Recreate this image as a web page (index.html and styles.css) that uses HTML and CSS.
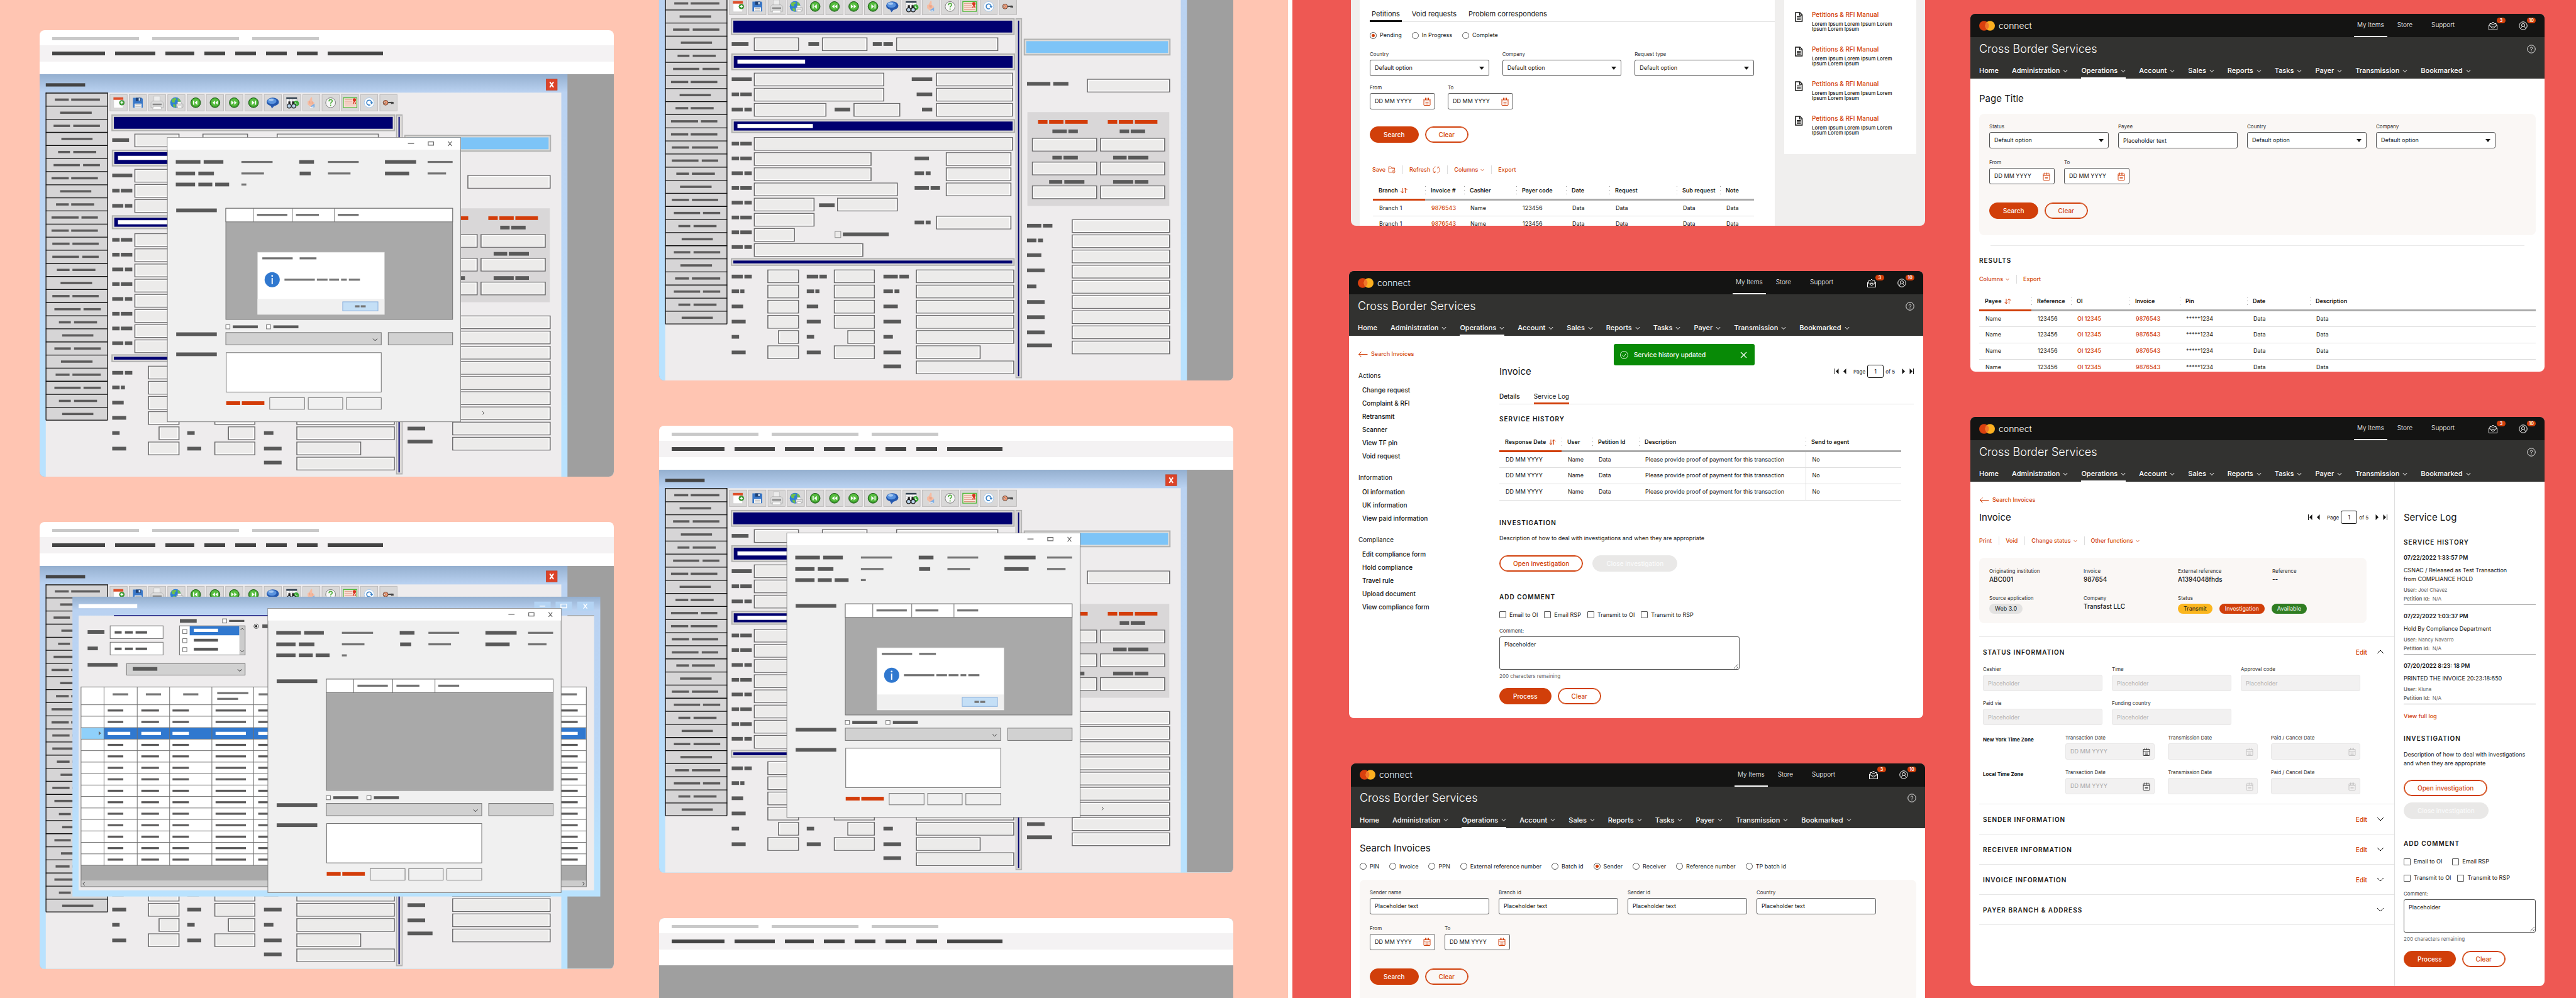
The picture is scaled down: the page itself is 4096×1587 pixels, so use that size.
FILE: index.html
```html
<!DOCTYPE html>
<html lang="en">
<head>
<meta charset="utf-8">
<title>Cross Border Services</title>
<link rel="stylesheet" href="styles.css">
</head>
<body>
<svg class="defs" aria-hidden="true">
  <defs id="legacy-defs"></defs>
  <symbol id="chev" viewBox="0 0 8 6"><path d="M.8 1 4 4.6 7.2 1" fill="none" stroke="currentColor"/></symbol>
  <symbol id="chev-up" viewBox="0 0 12 7"><path d="M1 6 6 1l5 5" fill="none" stroke="currentColor"/></symbol>
  <symbol id="chev-down" viewBox="0 0 12 7"><path d="M1 1l5 5 5-5" fill="none" stroke="currentColor"/></symbol>
  <symbol id="logo" viewBox="0 0 50 31"><circle cx="15.5" cy="15.5" r="15.5" fill="#d9400f"/><circle cx="34.5" cy="15.5" r="15.5" fill="#fbb020"/><path d="M25 3.3a15.5 15.5 0 0 1 0 24.4 15.500 15.500 0 0 1 0-24.400z" fill="#f0762b"/></symbol>
  <symbol id="mail" viewBox="0 0 28 28"><path d="M4 12H1v15h26V12h-3M4 7h5l5-5 5 5h5M4 7v8l10 7 10-7V7M9 11h10M9 15h10" fill="none" stroke="currentColor" stroke-width="2"/></symbol>
  <symbol id="user" viewBox="0 0 28 28"><g fill="none" stroke="currentColor" stroke-width="2"><circle cx="14" cy="14" r="12.500"/><circle cx="14" cy="12" r="5"/><path d="M6 23c1-4 4-6 5.500-6.500M22 23c-1-4-4-6-5.500-6.500"/></g></symbol>
  <symbol id="help" viewBox="0 0 28 28"><circle cx="14" cy="14" r="12.500" fill="none" stroke="currentColor" stroke-width="1.800"/><path d="M10.500 11.500c0-5 7.500-4.500 7 0-.3 2.500-3.500 2.500-3.500 5.500M14 19v2" fill="none" stroke="currentColor" stroke-width="1.800"/></symbol>
  <symbol id="back" viewBox="0 0 30 18"><path d="M1 9h28M9 1 1 9l8 8" fill="none" stroke="currentColor" stroke-width="2"/></symbol>
  <symbol id="cal" viewBox="0 0 24 26"><path d="M2 5h20v19a1 1 0 0 1-1 1H3a1 1 0 0 1-1-1zM2 11h20M7 16.500h10M7 20.500h10M7 1v7M12 1v7M17 1v7" fill="none" stroke="currentColor" stroke-width="2"/></symbol>
  <symbol id="sort" viewBox="0 0 22 20"><path d="M6 2v16M1 12l5 6 4-5M15 18V2M11 7l4-5 6 6" fill="none" stroke="currentColor" stroke-width="2"/></symbol>
  <symbol id="first" viewBox="0 0 14 18"><path d="M0 0h2v18H0zM13 0v18L4 9z" fill="currentColor"/></symbol>
  <symbol id="prev" viewBox="0 0 10 18"><path d="M9 0v18L0 9z" fill="currentColor"/></symbol>
  <symbol id="next" viewBox="0 0 10 18"><path d="M1 0v18l9-9z" fill="currentColor"/></symbol>
  <symbol id="last" viewBox="0 0 14 18"><path d="M12 0h2v18h-2zM1 0v18l9-9z" fill="currentColor"/></symbol>
  <symbol id="doc" viewBox="0 0 28 32"><path d="M4 2h14l7 7v21H4z" fill="none" stroke="currentColor" stroke-width="3"/><path d="M17 2v8h8M8 15h13M8 19.500h13M8 24h13" fill="none" stroke="currentColor" stroke-width="2.500"/></symbol>
  <symbol id="save" viewBox="0 0 24 24"><path d="M12 20H2V2h7l3 4h9v7M2 9h19" fill="none" stroke="currentColor" stroke-width="1.500"/><circle cx="18" cy="18" r="4" fill="none" stroke="currentColor" stroke-width="1.500"/><path d="M18 15v5M16 18l2 2 2-2" fill="none" stroke="currentColor"/></symbol>
  <symbol id="refresh" viewBox="0 0 24 24"><path d="M9 2C0 5-1 17 7 21M3 21h5v-5M15 22c9-3 10-15 2-19M21 3h-5v5" fill="none" stroke="currentColor" stroke-width="1.500"/></symbol>
  <symbol id="ok" viewBox="0 0 26 26"><circle cx="13" cy="13" r="12" fill="none" stroke="currentColor" stroke-width="1.800"/><path d="M7 13.500 11.500 18 19 8.500" fill="none" stroke="currentColor" stroke-width="1.800"/></symbol>
  <symbol id="cross" viewBox="0 0 22 22"><path d="M2 2l18 18M20 2 2 20" fill="none" stroke="currentColor" stroke-width="2.400"/></symbol>
</svg>

<main class="board">
  <section class="half half-before">
    <div class="column">
      <article class="card legacy">
        <header class="legacy-head">
          <div class="tabs-strip"><i></i><i></i><i></i></div>
          <div class="menu-strip"><i></i><i></i><i></i><i></i><i></i><i></i><i></i><i></i></div>
        </header>
        <svg class="legacy-screen" viewBox="0 107 1400 982" role="img" aria-label="Desktop form with a message"><use href="#screen"/><use href="#modal"/><use href="#message"/></svg>
      </article>
      <article class="card legacy">
        <header class="legacy-head">
          <div class="tabs-strip"><i></i><i></i><i></i></div>
          <div class="menu-strip"><i></i><i></i><i></i><i></i><i></i><i></i><i></i><i></i></div>
        </header>
        <svg class="legacy-screen" viewBox="0 107 1400 982" role="img" aria-label="Desktop form with stacked windows"><use href="#screen"/><use href="#grid-window"/><use href="#modal" x="245" y="-51"/></svg>
      </article>
    </div>
    <div class="column column-raised">
      <article class="card legacy">
        <header class="legacy-head">
          <div class="tabs-strip"><i></i><i></i><i></i></div>
          <div class="menu-strip"><i></i><i></i><i></i><i></i><i></i><i></i><i></i><i></i></div>
        </header>
        <svg class="legacy-screen" viewBox="0 107 1400 982" role="img" aria-label="Desktop form"><use href="#screen"/></svg>
      </article>
      <article class="card legacy">
        <header class="legacy-head">
          <div class="tabs-strip"><i></i><i></i><i></i></div>
          <div class="menu-strip"><i></i><i></i><i></i><i></i><i></i><i></i><i></i><i></i></div>
        </header>
        <svg class="legacy-screen" viewBox="0 107 1400 982" role="img" aria-label="Desktop form with a message"><use href="#screen"/><use href="#modal"/><use href="#message"/></svg>
      </article>
      <article class="card legacy legacy-empty">
        <header class="legacy-head">
          <div class="tabs-strip"><i></i><i></i><i></i></div>
          <div class="menu-strip"><i></i><i></i><i></i><i></i><i></i><i></i><i></i><i></i></div>
        </header>
      </article>
    </div>
  </section>

  <section class="half half-after">
    <div class="column column-top">
      <article class="card petitions">
        <div class="petitions-main">
          <nav class="tabs tabs-dark"><a href="#" class="on">Petitions</a><a href="#">Void requests</a><a href="#">Problem correspondens</a></nav>
          <div class="choices">
            <label><input type="radio" name="state" checked>Pending</label>
            <label><input type="radio" name="state">In Progress</label>
            <label><input type="radio" name="state">Complete</label>
          </div>
          <div class="fields fields-3">
            <label class="field">Country<span class="select"><select><option>Default option</option></select></span></label>
            <label class="field">Company<span class="select"><select><option>Default option</option></select></span></label>
            <label class="field">Request type<span class="select"><select><option>Default option</option></select></span></label>
          </div>
          <div class="dates dates-wide">
            <label class="field">From<span class="date"><input type="text" value="DD MM YYYY"><svg><use href="#cal"/></svg></span></label>
            <label class="field">To<span class="date"><input type="text" value="DD MM YYYY"><svg><use href="#cal"/></svg></span></label>
          </div>
          <div class="buttons"><button class="btn solid">Search</button><button class="btn">Clear</button></div>
          <div class="actions"><a href="#">Save <svg class="i12"><use href="#save"/></svg></a><a href="#">Refresh <svg class="i12"><use href="#refresh"/></svg></a><a href="#">Columns <svg class="i6"><use href="#chev"/></svg></a><a href="#">Export</a></div>
          <table class="data t-branch">
            <colgroup><col><col><col><col><col><col><col><col></colgroup>
            <thead><tr><th>Branch <svg><use href="#sort"/></svg></th><th>Invoice #</th><th>Cashier</th><th>Payer code</th><th>Date</th><th>Request</th><th>Sub request</th><th>Note</th></tr></thead>
            <tbody>
              <tr><td>Branch 1</td><td><a href="#">9876543</a></td><td>Name</td><td>123456</td><td>Data</td><td>Data</td><td>Data</td><td>Data</td></tr>
              <tr><td>Branch 1</td><td><a href="#">9876543</a></td><td>Name</td><td>123456</td><td>Data</td><td>Data</td><td>Data</td><td>Data</td></tr>
            </tbody>
          </table>
        </div>
        <aside class="manuals">
          <div class="manual"><svg><use href="#doc"/></svg><div><a href="#">Petitions &amp; RFI Manual</a><p>Lorem Ipsum Lorem Ipsum Lorem<br>Ipsum Lorem Ipsum</p></div></div>
          <div class="manual"><svg><use href="#doc"/></svg><div><a href="#">Petitions &amp; RFI Manual</a><p>Lorem Ipsum Lorem Ipsum Lorem<br>Ipsum Lorem Ipsum</p></div></div>
          <div class="manual"><svg><use href="#doc"/></svg><div><a href="#">Petitions &amp; RFI Manual</a><p>Lorem Ipsum Lorem Ipsum Lorem<br>Ipsum Lorem Ipsum</p></div></div>
          <div class="manual"><svg><use href="#doc"/></svg><div><a href="#">Petitions &amp; RFI Manual</a><p>Lorem Ipsum Lorem Ipsum Lorem<br>Ipsum Lorem Ipsum</p></div></div>
        </aside>
      </article>

      <article class="card service">
        <header class="app-head">
          <div class="topbar"><svg class="logo"><use href="#logo"/></svg><span class="brand">connect</span>
            <nav><a href="#" class="on">My Items</a><a href="#">Store</a><a href="#">Support</a></nav>
            <div class="alerts"><span><svg><use href="#mail"/></svg><b>3</b></span><span><svg><use href="#user"/></svg><b>10</b></span></div></div>
          <div class="titlebar"><h1>Cross Border Services</h1><svg><use href="#help"/></svg></div>
          <nav class="menu"><a href="#">Home</a><a href="#">Administration<svg><use href="#chev"/></svg></a><a href="#" class="on">Operations<svg><use href="#chev"/></svg></a><a href="#">Account<svg><use href="#chev"/></svg></a><a href="#">Sales<svg><use href="#chev"/></svg></a><a href="#">Reports<svg><use href="#chev"/></svg></a><a href="#">Tasks<svg><use href="#chev"/></svg></a><a href="#">Payer<svg><use href="#chev"/></svg></a><a href="#">Transmission<svg><use href="#chev"/></svg></a><a href="#">Bookmarked<svg><use href="#chev"/></svg></a></nav>
        </header>
        <div class="toast"><svg class="i13"><use href="#ok"/></svg><span>Service history updated</span><button><svg><use href="#cross"/></svg></button></div>
        <div class="service-body">
          <aside class="side-menu">
            <a href="#" class="back"><svg><use href="#back"/></svg>Search Invoices</a>
            <h3>Actions</h3>
            <ul><li><a href="#">Change request</a></li><li><a href="#">Complaint &amp; RFI</a></li><li><a href="#">Retransmit</a></li><li><a href="#">Scanner</a></li><li><a href="#">View TF pin</a></li><li><a href="#">Void request</a></li></ul>
            <h3>Information</h3>
            <ul><li><a href="#">OI information</a></li><li><a href="#">UK information</a></li><li><a href="#">View paid information</a></li></ul>
            <h3>Compliance</h3>
            <ul><li><a href="#">Edit compliance form</a></li><li><a href="#">Hold compliance</a></li><li><a href="#">Travel rule</a></li><li><a href="#">Upload document</a></li><li><a href="#">View compliance form</a></li></ul>
          </aside>
          <div class="service-main">
            <div class="title-row"><h2>Invoice</h2>
              <div class="pager"><svg class="p7"><use href="#first"/></svg><svg class="p5"><use href="#prev"/></svg><label>Page <input type="text" value="1"></label><span>of 5</span><svg class="p5"><use href="#next"/></svg><svg class="p7"><use href="#last"/></svg></div></div>
            <nav class="tabs tabs-log"><a href="#" class="strong">Details</a><a href="#" class="on">Service Log</a></nav>
            <h4 class="h-history">Service history</h4>
            <table class="data t-history">
              <colgroup><col><col><col><col><col></colgroup>
              <thead><tr><th>Response Date <svg><use href="#sort"/></svg></th><th>User</th><th>Petition Id</th><th>Description</th><th>Send to agent</th></tr></thead>
              <tbody>
                <tr><td>DD MM YYYY</td><td>Name</td><td>Data</td><td>Please provide proof of payment for this transaction</td><td>No</td></tr>
                <tr><td>DD MM YYYY</td><td>Name</td><td>Data</td><td>Please provide proof of payment for this transaction</td><td>No</td></tr>
                <tr><td>DD MM YYYY</td><td>Name</td><td>Data</td><td>Please provide proof of payment for this transaction</td><td>No</td></tr>
              </tbody>
            </table>
            <h4 class="h-invest">Investigation</h4>
            <p class="desc">Description of how to deal with investigations and when they are appropriate</p>
            <div class="buttons invest-buttons"><button class="btn">Open investigation</button><button class="btn" disabled>Close investigation</button></div>
            <h4 class="h-comment">Add comment</h4>
            <div class="checks"><label><input type="checkbox">Email to OI</label><label><input type="checkbox">Email RSP</label><label><input type="checkbox">Transmit to OI</label><label><input type="checkbox">Transmit to RSP</label></div>
            <label class="field comment">Comment:<textarea>Placeholder</textarea></label>
            <p class="remaining">200 characters remaining</p>
            <div class="buttons comment-buttons"><button class="btn solid">Process</button><button class="btn">Clear</button></div>
          </div>
        </div>
      </article>

      <article class="card search">
        <header class="app-head">
          <div class="topbar"><svg class="logo"><use href="#logo"/></svg><span class="brand">connect</span>
            <nav><a href="#" class="on">My Items</a><a href="#">Store</a><a href="#">Support</a></nav>
            <div class="alerts"><span><svg><use href="#mail"/></svg><b>3</b></span><span><svg><use href="#user"/></svg><b>10</b></span></div></div>
          <div class="titlebar"><h1>Cross Border Services</h1><svg><use href="#help"/></svg></div>
          <nav class="menu"><a href="#">Home</a><a href="#">Administration<svg><use href="#chev"/></svg></a><a href="#" class="on">Operations<svg><use href="#chev"/></svg></a><a href="#">Account<svg><use href="#chev"/></svg></a><a href="#">Sales<svg><use href="#chev"/></svg></a><a href="#">Reports<svg><use href="#chev"/></svg></a><a href="#">Tasks<svg><use href="#chev"/></svg></a><a href="#">Payer<svg><use href="#chev"/></svg></a><a href="#">Transmission<svg><use href="#chev"/></svg></a><a href="#">Bookmarked<svg><use href="#chev"/></svg></a></nav>
        </header>
        <div class="page-body">
          <h2>Search Invoices</h2>
          <div class="choices by-kind">
            <label><input type="radio" name="kind">PIN</label><label><input type="radio" name="kind">Invoice</label><label><input type="radio" name="kind">PPN</label><label><input type="radio" name="kind">External reference number</label><label><input type="radio" name="kind">Batch id</label><label><input type="radio" name="kind" checked>Sender</label><label><input type="radio" name="kind">Receiver</label><label><input type="radio" name="kind">Reference number</label><label><input type="radio" name="kind">TP batch id</label>
          </div>
          <form class="panel">
            <div class="fields">
              <label class="field">Sender name<input type="text" value="Placeholder text"></label>
              <label class="field">Branch id<input type="text" value="Placeholder text"></label>
              <label class="field">Sender id<input type="text" value="Placeholder text"></label>
              <label class="field">Country<input type="text" value="Placeholder text"></label>
            </div>
            <div class="dates">
              <label class="field">From<span class="date"><input type="text" value="DD MM YYYY"><svg><use href="#cal"/></svg></span></label>
              <label class="field">To<span class="date"><input type="text" value="DD MM YYYY"><svg><use href="#cal"/></svg></span></label>
            </div>
            <div class="buttons"><button type="button" class="btn solid">Search</button><button type="button" class="btn">Clear</button></div>
          </form>
        </div>
      </article>
    </div>

    <div class="column column-fourth">
      <article class="card results">
        <header class="app-head">
          <div class="topbar"><svg class="logo"><use href="#logo"/></svg><span class="brand">connect</span>
            <nav><a href="#" class="on">My Items</a><a href="#">Store</a><a href="#">Support</a></nav>
            <div class="alerts"><span><svg><use href="#mail"/></svg><b>3</b></span><span><svg><use href="#user"/></svg><b>10</b></span></div></div>
          <div class="titlebar"><h1>Cross Border Services</h1><svg><use href="#help"/></svg></div>
          <nav class="menu"><a href="#">Home</a><a href="#">Administration<svg><use href="#chev"/></svg></a><a href="#" class="on">Operations<svg><use href="#chev"/></svg></a><a href="#">Account<svg><use href="#chev"/></svg></a><a href="#">Sales<svg><use href="#chev"/></svg></a><a href="#">Reports<svg><use href="#chev"/></svg></a><a href="#">Tasks<svg><use href="#chev"/></svg></a><a href="#">Payer<svg><use href="#chev"/></svg></a><a href="#">Transmission<svg><use href="#chev"/></svg></a><a href="#">Bookmarked<svg><use href="#chev"/></svg></a></nav>
        </header>
        <div class="page-body">
          <h2>Page Title</h2>
          <form class="panel">
            <div class="fields">
              <label class="field">Status<span class="select"><select><option>Default option</option></select></span></label>
              <label class="field">Payee<input type="text" value="Placeholder text"></label>
              <label class="field">Country<span class="select"><select><option>Default option</option></select></span></label>
              <label class="field">Company<span class="select"><select><option>Default option</option></select></span></label>
            </div>
            <div class="dates">
              <label class="field">From<span class="date"><input type="text" value="DD MM YYYY"><svg><use href="#cal"/></svg></span></label>
              <label class="field">To<span class="date"><input type="text" value="DD MM YYYY"><svg><use href="#cal"/></svg></span></label>
            </div>
            <div class="buttons"><button type="button" class="btn solid">Search</button><button type="button" class="btn">Clear</button></div>
          </form>
          <hr>
          <h4>Results</h4>
          <div class="actions"><a href="#">Columns <svg class="i6"><use href="#chev"/></svg></a><a href="#">Export</a></div>
          <table class="data t-results">
            <colgroup><col><col><col><col><col><col><col></colgroup>
            <thead><tr><th>Payee <svg><use href="#sort"/></svg></th><th>Reference</th><th>OI</th><th>Invoice</th><th>Pin</th><th>Date</th><th>Description</th></tr></thead>
            <tbody>
              <tr><td>Name</td><td>123456</td><td><a href="#">OI 12345</a></td><td><a href="#">9876543</a></td><td>*****1234</td><td>Data</td><td>Data</td></tr>
              <tr><td>Name</td><td>123456</td><td><a href="#">OI 12345</a></td><td><a href="#">9876543</a></td><td>*****1234</td><td>Data</td><td>Data</td></tr>
              <tr><td>Name</td><td>123456</td><td><a href="#">OI 12345</a></td><td><a href="#">9876543</a></td><td>*****1234</td><td>Data</td><td>Data</td></tr>
              <tr><td>Name</td><td>123456</td><td><a href="#">OI 12345</a></td><td><a href="#">9876543</a></td><td>*****1234</td><td>Data</td><td>Data</td></tr>
            </tbody>
          </table>
        </div>
      </article>

      <article class="card invoice">
        <header class="app-head">
          <div class="topbar"><svg class="logo"><use href="#logo"/></svg><span class="brand">connect</span>
            <nav><a href="#" class="on">My Items</a><a href="#">Store</a><a href="#">Support</a></nav>
            <div class="alerts"><span><svg><use href="#mail"/></svg><b>3</b></span><span><svg><use href="#user"/></svg><b>10</b></span></div></div>
          <div class="titlebar"><h1>Cross Border Services</h1><svg><use href="#help"/></svg></div>
          <nav class="menu"><a href="#">Home</a><a href="#">Administration<svg><use href="#chev"/></svg></a><a href="#" class="on">Operations<svg><use href="#chev"/></svg></a><a href="#">Account<svg><use href="#chev"/></svg></a><a href="#">Sales<svg><use href="#chev"/></svg></a><a href="#">Reports<svg><use href="#chev"/></svg></a><a href="#">Tasks<svg><use href="#chev"/></svg></a><a href="#">Payer<svg><use href="#chev"/></svg></a><a href="#">Transmission<svg><use href="#chev"/></svg></a><a href="#">Bookmarked<svg><use href="#chev"/></svg></a></nav>
        </header>
        <div class="invoice-body">
          <div class="invoice-main">
            <a href="#" class="back"><svg><use href="#back"/></svg>Search Invoices</a>
            <div class="title-row"><h2>Invoice</h2>
              <div class="pager"><svg class="p7"><use href="#first"/></svg><svg class="p5"><use href="#prev"/></svg><label>Page <input type="text" value="1"></label><span>of 5</span><svg class="p5"><use href="#next"/></svg><svg class="p7"><use href="#last"/></svg></div></div>
            <div class="actions"><a href="#">Print</a><a href="#">Void</a><a href="#">Change status <svg class="i6"><use href="#chev"/></svg></a><a href="#">Other functions <svg class="i6"><use href="#chev"/></svg></a></div>
            <dl class="summary">
              <div><dt>Originating institution</dt><dd>ABC001</dd></div>
              <div><dt>Invoice</dt><dd>987654</dd></div>
              <div><dt>External reference</dt><dd>A1394048fhds</dd></div>
              <div><dt>Reference</dt><dd>--</dd></div>
              <div><dt>Source application</dt><dd class="pills"><span class="pill">Web 3.0</span></dd></div>
              <div><dt>Company</dt><dd>Transfast LLC</dd></div>
              <div><dt>Status</dt><dd class="pills"><span class="pill amber">Transmit</span><span class="pill red">Investigation</span><span class="pill green">Available</span></dd></div>
            </dl>
            <section class="fold">
              <div class="fold-head"><h4>Status information</h4><a href="#">Edit</a><button><svg><use href="#chev-up"/></svg></button></div>
              <div class="fold-body">
                <div class="fields">
                  <label class="field">Cashier<input type="text" value="Placeholder" disabled></label>
                  <label class="field">Time<input type="text" value="Placeholder" disabled></label>
                  <label class="field">Approval code<input type="text" value="Placeholder" disabled></label>
                  <label class="field">Paid via<input type="text" value="Placeholder" disabled></label>
                  <label class="field">Funding country<input type="text" value="Placeholder" disabled></label>
                </div>
                <div class="zone"><b>New York Time Zone</b>
                  <label class="field">Transaction Date<span class="date off now"><input type="text" value="DD MM YYYY" disabled><svg><use href="#cal"/></svg></span></label>
                  <label class="field">Transmission Date<span class="date off"><input type="text" disabled><svg><use href="#cal"/></svg></span></label>
                  <label class="field">Paid / Cancel Date<span class="date off"><input type="text" disabled><svg><use href="#cal"/></svg></span></label></div>
                <div class="zone"><b>Local Time Zone</b>
                  <label class="field">Transaction Date<span class="date off now"><input type="text" value="DD MM YYYY" disabled><svg><use href="#cal"/></svg></span></label>
                  <label class="field">Transmission Date<span class="date off"><input type="text" disabled><svg><use href="#cal"/></svg></span></label>
                  <label class="field">Paid / Cancel Date<span class="date off"><input type="text" disabled><svg><use href="#cal"/></svg></span></label></div>
              </div>
            </section>
            <section class="fold"><div class="fold-head"><h4>Sender information</h4><a href="#">Edit</a><button><svg><use href="#chev-down"/></svg></button></div></section>
            <section class="fold"><div class="fold-head"><h4>Receiver information</h4><a href="#">Edit</a><button><svg><use href="#chev-down"/></svg></button></div></section>
            <section class="fold"><div class="fold-head"><h4>Invoice information</h4><a href="#">Edit</a><button><svg><use href="#chev-down"/></svg></button></div></section>
            <section class="fold fold-last"><div class="fold-head"><h4>Payer branch &amp; address</h4><button><svg><use href="#chev-down"/></svg></button></div></section>
          </div>
          <aside class="log">
            <h2>Service Log</h2>
            <h4>Service history</h4>
            <div class="entry"><time>07/22/2022 1:33:57 PM</time><p>CSNAC / Released as Test Transaction<br>from COMPLIANCE HOLD</p><small><b>User:</b> Joel Chavez<br><b>Petition Id:</b>&nbsp; N/A</small></div>
            <div class="entry"><time>07/22/2022 1:03:37 PM</time><p>Hold By Compliance Department</p><small><b>User:</b> Nancy Navarro<br><b>Petition Id:</b>&nbsp; N/A</small></div>
            <div class="entry"><time>07/20/2022 8:23: 18 PM</time><p>PRINTED THE INVOICE 20:23:18:650</p><small><b>User:</b> Kluna<br><b>Petition Id:</b>&nbsp; N/A</small></div>
            <a href="#" class="more">View full log</a>
            <h4 class="h-invest">Investigation</h4>
            <p class="desc">Description of how to deal with investigations<br>and when they are appropriate</p>
            <div class="buttons stacked"><button class="btn">Open investigation</button><button class="btn" disabled>Close investigation</button></div>
            <h4 class="h-comment">Add comment</h4>
            <div class="checks checks-wide"><label><input type="checkbox">Email to OI</label><label><input type="checkbox">Email RSP</label></div>
            <div class="checks"><label><input type="checkbox">Transmit to OI</label><label><input type="checkbox">Transmit to RSP</label></div>
            <label class="field comment">Comment:<textarea>Placeholder</textarea></label>
            <p class="remaining">200 characters remaining</p>
            <div class="buttons comment-buttons"><button class="btn solid">Process</button><button class="btn">Clear</button></div>
          </aside>
        </div>
      </article>
    </div>
  </section>
</main>
<script src="legacy.js"></script>
</body>
</html>
```

FILE: legacy.js
```js
// Builds the shared drawings of the old desktop client: the main form,
// the comment window, the message box and the transaction grid window.
const rect = (x, y, w, h, fill, extra = '') =>
  `<rect x="${x}" y="${y}" width="${w}" height="${h}" fill="${fill}" ${extra}/>`;
const bars = (y, h, color, list) =>
  list.map(([a, b]) => rect(a, y - h / 2, b - a, h, color)).join('');
const label = (y, ...list) => bars(y, 9, '#595959', list);
const field = (x, y, w, h = 33) =>
  rect(x, y, w, h, '#6d6c6d') + rect(x + 2.5, y + 2, w - 5, h - 4, '#fff') +
  rect(x + 5, y + 4, w - 10, h - 8, '#ecebea');
const band = (x, y, w, h, color = '#000070') =>
  rect(x, y, w, h, '#b1b1b0') + rect(x + 3, y + 3, w - 6, h - 6, '#dedcd9') +
  rect(x + 6, y + 6, w - 12, h - 12, color);
const line = (d, color, w = 2, extra = '') =>
  `<path d="${d}" fill="none" stroke="${color}" stroke-width="${w}" ${extra}/>`;
const box = (x, y, w, h, fill, stroke = '#707070', sw = 1.5) =>
  rect(x, y, w, h, fill, `stroke="${stroke}" stroke-width="${sw}"`);

// Toolbar icons, each drawn round its own centre.
const ball = '<circle r="12" fill="#3b9a2c" stroke="#1e5c18" stroke-width="1.5"/><circle cy="-1" r="9.500" fill="#57bd3f"/>';
const icons = [
  '<path d="M-12-12h23v25h-23z" fill="#fff" stroke="#c9c7c7"/><path d="M-12.500-13h24v6h-24z" fill="#dd4f2a"/><circle cx="8" r="6" fill="#3fa535" stroke="#2a6b22"/><path d="M8-3.500v7M4.500 0h7" stroke="#fff" stroke-width="2"/>',
  '<path d="M-12-12h22l2 3v21h-24z" fill="#3a78c8"/><path d="M-5-12h12v8h-12z" fill="#1d3f73"/><path d="M2-11h4v6h-4z" fill="#cfe0f2"/><path d="M-8 2h17v10h-17z" fill="#f4f4f4"/><path d="M-6 5h13M-6 9h13" stroke="#999"/>',
  '<path d="M-8-16h15v14h-15z" fill="#ececec" stroke="#bbb"/><path d="M-11-4h22l4 4v12h-30v-12z" fill="#dcdcdc" stroke="#a5a5a5"/><path d="M-11 4h22" stroke="#888" stroke-width="4"/><path d="M-9 9h18l2 7h-22z" fill="#fafafa" stroke="#aaa"/>',
  '<circle cx="-2" r="13" fill="#2f7fd4"/><path d="M-12-7c4-6 12-5 12-2s-5 2-4 6-4 4-7 1zM3-11c5 1 8 6 7 9s-6 0-7-3zM-8 4c5-1 8 2 5 8-4-1-6-4-5-8z" fill="#6fbf4b"/><path d="M3-2h9v5h-9z" fill="#fff" stroke="#aaa"/><path d="M0 3h16v8h-16z" fill="#e2e2e2" stroke="#999"/><path d="M3 8h10v5h-10z" fill="#fff" stroke="#aaa"/>',
  ball + '<path d="M-5-5v10" stroke="#fff" stroke-width="2.500"/><path d="M4-5.500v11l-6.500-5.500z" fill="#fff"/>',
  ball + '<path d="M0-5v10l-6-5zM7-5v10l-6-5z" fill="#fff"/>',
  ball + '<path d="M0-5v10l6-5zM-7-5v10l6-5z" fill="#fff"/>',
  ball + '<path d="M5-5v10" stroke="#fff" stroke-width="2.500"/><path d="M-4-5.500v11l6.500-5.500z" fill="#fff"/>',
  '<path d="M-6 6 -2 14 4 7z" fill="#2c5cb0"/><ellipse cy="-2" rx="15" ry="10.500" fill="#2458ae"/><ellipse cx="-2" cy="-4" rx="11" ry="7" fill="#5b94df"/><ellipse cx="-4" cy="-7" rx="6" ry="3" fill="#a5c8f2"/>',
  '<path d="M-14-12h26v20h-26z" fill="#fff" stroke="#aaa"/><path d="M-14-13h26v4h-26z" fill="#33414f"/><path d="M-14-4h26M-14 1h26M-6-8v15M2-8v15" stroke="#bbb"/><circle cx="10" cy="2" r="7" fill="#3aa935"/><path d="M9-2v5h4" fill="none" stroke="#fff" stroke-width="1.500"/><path d="M-9-3h5v7h-5zM0-3h5v7h-5z" fill="#222"/><circle cx="-7" cy="8" r="5" fill="#b9d3ea" stroke="#222" stroke-width="2"/><circle cx="4" cy="8" r="5" fill="#b9d3ea" stroke="#222" stroke-width="2"/>',
  '<path d="M-1-13c2-1 3 0 3 2v7l5 3v9l-9 2-7-6v-7l4-2z" fill="#f6bca2"/><path d="M-4-4v6M-1-3v6M2-3v6" stroke="#dd9678"/><path d="M-1 8 8 2v9l-9 2z" fill="#7fb0e6"/><path d="M-3 11l8-2v2l-8 2z" fill="#fff"/>',
  '<circle r="12" fill="#f7f7f7" stroke="#666" stroke-width="1.300"/><path d="M-4-3c0-6 8-6 8-1 0 3-4 3-4 6M0 5v3" fill="none" stroke="#4fae3a" stroke-width="2.500"/>',
  '<path d="M-16-12h33v24h-33z" fill="#fbe3da" stroke="#4fb83a" stroke-width="2"/><path d="M-13-7h19M-13-2h19M-13 3h27M-13 8h27" stroke="#d98e7b" stroke-width="1.500"/><circle cx="11" cy="-7" r="4" fill="#d8321c"/><path d="M11-5l-3 8M11-5l3 8" stroke="#d8321c" stroke-width="2"/>',
  '<circle r="12" fill="#fff" stroke="#a9cbed" stroke-width="1.500"/><path d="M3 5a6 6 0 1 1 3-5" fill="none" stroke="#3b82c8" stroke-width="2.500"/><path d="M2-1h8l-4 5z" fill="#3b82c8"/>',
  '<path d="M-2 0 10-1M7-1l1 4M11-2v5" fill="none" stroke="#444" stroke-width="3"/><circle cx="-7" r="6" fill="#ef9a76" stroke="#5a3a2c" stroke-width="1.300"/><circle cx="-9" r="1.800" fill="#fff" stroke="#5a3a2c"/>'
];

// Side menu: left offset and length of the words in each button.
const sideWords = [
  [[37, 71], [77, 147]], [[50, 127]], [[34, 74], [82, 147]], [[53, 129]], [[45, 74], [82, 138]],
  [[34, 98], [106, 147]], [[29, 71], [77, 142]], [[50, 126]], [[40, 71], [77, 133]], [[29, 95], [102, 142]],
  [[29, 71], [77, 142]], [[31, 73], [80, 144]], [[31, 96], [104, 144]], [[42, 73], [80, 136]], [[51, 128]],
  [[31, 73], [80, 144]], [[36, 100], [107, 149]], [[47, 76], [84, 140]], [[55, 131]], [[36, 76], [84, 149]],
  [[52, 129]], [[39, 73], [80, 149]], [[36, 100], [107, 149]], [[47, 76], [84, 140]], [[55, 131]]
];

const a = [[177, 195], [198, 226]];
const b = [[177, 204], [208, 226]];

let screen = rect(0, 107, 1400, 982, '#9f9f9f') + rect(0, 107, 1287, 982, 'url(#frame)') +
  rect(15, 152, 1257, 937, '#eeeced') + bars(133, 8, '#444', [[15, 111]]) +
  rect(1235, 119, 27, 27, '#dc4328', 'stroke="#b9391f"') + line('M1244 126l9 13M1253 126l-9 13', '#fff', 3);

screen += rect(15, 152, 151, 799, '#d6d5d6');
sideWords.forEach((w, i) => {
  screen += line(`M15 ${153 + i * 31.94}h151`, '#111') + bars(169 + i * 31.94, 5.5, '#5c5b5b', w);
});
screen += line('M15.500 152v798M165.500 152v798M15 950.500h151', '#111');

icons.forEach((d, i) => {
  screen += box(171.5 + i * 47, 156.5, 42, 40, '#d9d8d8', '#b5b3b3', 1.2) +
    `<g transform="translate(${192.5 + i * 47} 176.500)">${d}</g>`;
});

// Top block
screen += band(175, 205, 692, 41) + band(869, 205, 16, 878).replace('#dedcd9', '#d4d2d0') +
  rect(871, 208, 12, 872, '#d9d7d6') + rect(875, 211, 3, 867, '#000070') +
  band(889, 255, 358, 41, '#7dc4f7') +
  label(268, [177, 218], [364, 390], [521, 543], [547, 570]) +
  field(231, 252, 110) + field(397, 252, 111) + field(578, 252, 249);

// Second block
screen += band(176, 291, 692, 41) + rect(191, 306, 165, 10, '#fff') +
  label(354, [177, 226], [616, 666]) + field(231, 338, 318) + field(675, 338, 188) +
  label(391, ...a, [628, 666]) + field(231, 375, 318) + field(675, 375, 188) +
  label(428, ...b, [428, 466], [641, 666]) + field(231, 412, 177) + field(474, 412, 114) + field(675, 412, 188);

// Third block
screen += band(176, 451, 692, 34) + rect(191, 463, 184, 10, '#fff') +
  field(231, 495, 632) + field(231, 532, 287) + field(231, 569, 287) + field(231, 606, 351) +
  field(231, 643, 148) + field(434, 643, 148) + field(231, 680, 148) + field(231, 717, 100) + field(231, 754, 267) +
  field(699, 532, 160) + field(699, 569, 160) + field(699, 606, 160) + field(675, 687, 184) +
  label(511, ...a) + label(547, ...a, [623, 658]) + label(583, ...b, [623, 646], [650, 662]) +
  label(619, ...a, [623, 658], [662, 685]) + label(655, ...b) + label(661, [390, 428]) + label(691, ...a) +
  label(703, [623, 646], [650, 662]) + label(727, ...a) + label(763, ...b) +
  box(429, 725, 14, 15, '#ecebea', '#888') + label(732, [448, 560]);

// Bottom block
screen += band(175, 790, 692, 19);
[818, 855, 892, 929, 966, 1003, 1040].forEach((y, i) => {
  if (i < 6) screen += i === 4 ? field(290, y, 51) + field(459, y, 67) : field(264, y, 77) + field(426, y, 100);
  screen += field(626, y, i === 5 ? 158 : 240);
});
screen += label(835, ...b, [360, 388], [391, 409], [547, 582], [586, 609]) +
  label(871, [177, 195], [198, 208], [360, 378], [381, 391], [547, 570], [574, 586]) +
  label(908, [177, 205], [360, 388], [547, 582]) + label(945, [177, 211], [360, 394], [547, 590]) +
  label(982, [177, 195], [360, 378], [547, 570]) + label(1020, [177, 211], [360, 394], [547, 590]) +
  label(1054, [547, 590]);

// Right column
const red = (y, ...list) => bars(y, 9, '#d33d0a', list);
screen += label(365, [897, 954], [961, 998]) + field(1043, 353, 203) + rect(898, 434, 346, 229, '#d9d7d8') +
  red(458, [924, 947], [951, 986], [990, 1045], [1094, 1117], [1121, 1156], [1160, 1215]) +
  label(481, [959, 994], [998, 1021], [1123, 1146], [1150, 1185]) +
  label(545, [959, 982], [986, 1021], [1107, 1140], [1144, 1193]) +
  label(604, [951, 983], [988, 1037], [1107, 1156], [1160, 1193]);
[497, 555, 613].forEach(y => { screen += field(909, y, 159) + field(1075, y, 159); });
const rightWords = [[[897, 932], [936, 959]], [[897, 920], [924, 936]], [[897, 932]], [[897, 940]], [[897, 920]], [[897, 940]], [[897, 940]], [[897, 940]], [[897, 958]]];
[711, 747, 783, 820, 859, 897, 934, 971, 1003].forEach((y, i) => {
  screen += field(1006, 695.5 + i * 37, 240) + label(y, ...rightWords[i]);
});

// Comment window
const thin = (y, ...list) => bars(y, 5, '#747474', list);
const modal = box(311.5, 261.5, 715, 693, '#f0f0f0', '#808080') + rect(312, 262, 714, 29, '#fff') +
  line('M898 276h15M947.500 272h13v8h-13zM996 271l9 11M1005 271l-9 11', '#666', 1.8) +
  label(321, [332, 392], [400, 448], [633, 669], [842, 918]) + thin(321, [492, 568], [703, 778], [946, 1007]) +
  label(349, [332, 379], [387, 425], [634, 661], [842, 901]) + thin(349, [492, 547], [703, 758], [946, 991]) +
  label(376, [332, 379], [387, 421], [428, 462]) + thin(376, [492, 504]) +
  label(439, [333, 432]) + box(454, 434, 553, 271, '#a9a9a9') + box(454, 434, 553, 33, '#fff') +
  line('M521 434v33M616 434v33M719 434v33', '#707070', 1.5) + thin(450, [530, 604], [625, 681], [727, 778]) +
  box(454, 718, 10, 10, '#fff') + box(553, 718, 10, 10, '#fff') + bars(723, 7, '#595959', [[471, 532], [570, 631]]) +
  label(741, [333, 432]) + box(454, 737, 379, 30, '#d1d1d1') + box(850, 737, 157, 30, '#d1d1d1') +
  line('M813 752l5 5 5-5', '#222', 1.5) + label(790, [333, 432]) + box(455, 786, 378, 96, '#fff') +
  red(909, [455, 489], [493, 548]) +
  box(561, 896, 85, 28, '#f0f0f0') + box(655, 896, 84, 28, '#f0f0f0') + box(748, 896, 85, 28, '#f0f0f0');

const message = rect(531, 541, 310, 152, '#fff', 'stroke="#c9c9c9"') + rect(531.5, 655, 309, 37, '#f0f0f0') +
  thin(556, [543, 617], [634, 675]) + '<circle cx="567" cy="608" r="18.500" fill="#3078cf"/>' +
  line('M567 604v15', '#fff', 3) + '<circle cx="567" cy="599" r="2.200" fill="#fff"/>' +
  thin(608, [597, 671], [676, 702], [706, 730], [735, 749], [754, 781]) +
  box(739, 662, 86, 22, '#c4dff6', '#86aedb') + thin(673, [769, 780], [783, 795]) +
  line('M1080 929l3 4-3 4', '#333', 1.3);

// Transaction grid window
let grid = rect(80, 182, 1287, 731, 'url(#frame)') + rect(95, 228, 1257, 670, '#eeeced') + rect(95, 200, 143, 10, '#fff') +
  rect(181, 227, 376, 2, '#000070') + rect(1287, 227, 65, 2, '#9f9f9f') +
  ['1206', '1258', '1311'].map(x => rect(+x, 194, 40, 22, '#b3d3f3')).join('') +
  line('M1219 205h14M1271 200h14v9h-14zM1326 199l9 12M1335 199l-9 12', '#fff', 2) +
  label(268, [117, 158]) + box(172, 253, 129, 31, '#fff') + bars(269, 6, '#595959', [[183, 200], [208, 227], [234, 262]]) +
  label(308, [117, 142]) + box(172, 293, 129, 31, '#fff') + bars(309, 6, '#595959', [[183, 200], [208, 227], [234, 262]]) +
  label(241, [342, 383]) + box(446, 236, 10, 10, '#fff') + bars(241, 5, '#595959', [[462, 499]]) +
  box(341, 253, 160, 71, '#fff') + rect(366, 254, 121, 22, '#3078cf') + rect(376, 260, 59, 8, '#fff') +
  box(349, 262, 10, 10, '#fff') + box(349, 284, 10, 10, '#fff') + box(349, 306, 10, 10, '#fff') +
  bars(288, 7, '#595959', [[376, 435]]) + bars(310, 7, '#595959', [[376, 435]]) + rect(487, 254, 13, 69, '#ccc') +
  line('M490 263l4-4 4 4M490 313l4 4 4-4', '#333', 1.4) +
  '<circle cx="528" cy="254" r="5.500" fill="#fff" stroke="#333" stroke-width="1.300"/><circle cx="528" cy="254" r="3" fill="#222"/>' +
  label(254, [543, 560]) + label(348, [117, 190]) + box(212, 345, 289, 28, '#d1d1d1') + label(358, [227, 287]) +
  line('M483 359l5 5 5-5', '#222', 1.5) +
  box(101, 402, 1232, 487, '#a9a9a9') + rect(102, 403, 1230, 434, '#fff') + rect(102, 501, 55, 28, '#8fd0fa') +
  rect(157, 501, 1175, 28, '#3078cf') + rect(102, 874, 1230, 14, '#ccc') + line('M110 878l-4 4 4 4M1324 878l4 4-4 4', '#222', 1.5) +
  '<path d="M144 510v10l6-5z" fill="#666"/>' + line('M157 402v435M238 402v435M317 402v435M420 402v435M522 402v435', '#707070', 1.5) +
  thin(420, [178, 216], [259, 296], [350, 387], [534, 560], [1260, 1310]) + thin(417, [433, 509]) + thin(431, [433, 484]);
for (let i = 0; i < 15; i++) grid += line(`M101 ${445.4 + i * 27.97}h1232`, '#707070', 1.5);
for (let i = 0; i < 14; i++) {
  grid += i === 2
    ? bars(515.4, 8, '#fff', [[166, 221], [248, 296], [324, 364], [429, 503], [533, 560], [1260, 1312]])
    : bars(459.4 + i * 27.97, 5, '#5c5b5b', [[166, 204], [248, 291], [324, 364], [429, 503], [533, 560], [1260, 1312]]);
}

document.getElementById('legacy-defs').innerHTML =
  '<linearGradient id="frame" x1="0" x2="0" y1="0" y2="1"><stop offset="0" stop-color="#94afcf"/><stop offset=".045" stop-color="#bad2f1"/><stop offset=".5" stop-color="#bbd7f6"/><stop offset=".85" stop-color="#b9e2fe"/></linearGradient>' +
  `<g id="screen">${screen}</g><g id="modal">${modal}</g><g id="message">${message}</g><g id="grid-window">${grid}</g>`;
```

FILE: styles.css
```css
* { box-sizing: border-box; }
body { margin: 0; font: 400 9px/14px Inter, "Liberation Sans", sans-serif; color: #141413; }
h1, h2, h3, h4, p, ul, dl, dd { margin: 0; padding: 0; font-weight: 400; }
ul { list-style: none; }
a { color: inherit; text-decoration: none; }
svg { display: block; flex: none; }
button, input, select, textarea { font: inherit; color: inherit; margin: 0; }
.defs { position: absolute; width: 0; height: 0; }

.board { display: grid; grid-template-columns: 1fr 1fr; height: 100vh; overflow: hidden; }
.half { display: grid; grid-template-columns: 1fr 1fr; column-gap: 72px; overflow: hidden; }
.half-before { background: #ffc5b2; padding: 0 87px 0 63px; }
.half-after { background: #ee5853; border-left: 7px solid #fff; padding: 0 50px 0 93px; }
.column { display: flex; flex-direction: column; gap: 72px; padding-top: 48px; min-width: 0; }
.column-raised { padding-top: 0; margin-top: -105px; }
.column-top { padding-top: 0; }
.column-fourth { padding-top: 22px; }
.card { background: #fff; border-radius: 8px; overflow: hidden; flex: none; position: relative; }

/* Old desktop client */
.legacy-head { height: 70px; }
.legacy-screen { width: 100%; height: auto; }
.legacy-empty { background: #9f9f9f; height: 300px; }
.legacy-empty .legacy-head { background: #fff; height: 75px; }
.tabs-strip, .menu-strip { display: flex; align-items: center; padding: 0 20px; }
.tabs-strip { height: 24px; gap: 21px; padding-top: 3px; }
.tabs-strip i { width: 138px; height: 5px; background: #c9c9c9; }
.tabs-strip i:last-child { width: 106px; }
.menu-strip { height: 26px; gap: 16px; background: #f4f2f3; }
.menu-strip i { width: 33px; height: 6px; background: #444; }
.menu-strip i:nth-child(1) { width: 84px; }
.menu-strip i:nth-child(2) { width: 64px; }
.menu-strip i:nth-child(3) { width: 46px; }
.menu-strip i:nth-child(8) { width: 88px; }

/* Application header */
.app-head { color: #fff; background: #323230; }
.topbar { display: flex; align-items: center; height: 37px; padding: 0 14px; background: #141413; }
.logo { width: 25px; height: 16px; }
.brand { font-size: 14px; font-weight: 300; margin-left: 6px; }
.topbar nav { display: flex; align-items: stretch; height: 37px; margin-left: auto; font-size: 10px; font-weight: 300; line-height: 35px; }
.topbar nav a { padding: 0 5px; border-bottom: 2px solid transparent; }
.topbar nav a + a { margin-left: 11px; }
.topbar nav a:last-child { margin-left: 20px; }
.topbar .on, .menu .on { border-bottom-color: #fff; }
.alerts { display: flex; gap: 21px; margin-left: 49px; }
.alerts span { position: relative; width: 27px; }
.alerts svg { width: 14px; height: 14px; }
.alerts b { position: absolute; left: 13px; top: -6px; width: 14px; height: 9px; border-radius: 5px; background: #d13f0a; font-size: 7px; line-height: 9px; font-weight: 600; text-align: center; }
.titlebar { display: flex; align-items: center; justify-content: space-between; height: 37px; padding: 0 14px; }
.titlebar h1 { font-size: 18px; font-weight: 300; }
.titlebar svg { width: 14px; height: 14px; }
.menu { display: flex; gap: 21px; height: 29px; padding: 6px 14px 0; font-size: 11px; font-weight: 500; line-height: 21px; }
.menu a { display: flex; align-items: center; gap: 5px; border-bottom: 2px solid transparent; }
.menu svg { width: 8px; height: 6px; }

/* Shared controls */
h2 { font-size: 15px; line-height: 20px; }
h4 { font-size: 10px; font-weight: 600; letter-spacing: 1px; text-transform: uppercase; }
.back { display: flex; align-items: center; gap: 5px; color: #d13f0a; font-weight: 500; }
.back svg { width: 15px; height: 9px; margin-left: 1px; }
.tabs { display: flex; font-size: 10px; line-height: 20px; box-shadow: inset 0 -1px #e0e0e0; }
.tabs a { border-bottom: 3px solid transparent; }
.tabs-dark { gap: 13px; font-size: 11px; }
.tabs-dark a { padding: 0 3px; }
.tabs-dark .on { border-color: #141413; }
.tabs-log { gap: 22px; margin-top: 19px; }
.tabs-log .on { border-color: #d13f0a; }
.tabs-log .strong { font-weight: 500; }
.choices, .checks { display: flex; gap: 16px; }
.choices label, .checks label { display: flex; align-items: center; gap: 5px; white-space: nowrap; }
.checks { gap: 10px; }
.checks-wide { gap: 16px; }
input[type=radio], input[type=checkbox] { appearance: none; flex: none; width: 11px; height: 11px; border: 1px solid #555; background: #fff; border-radius: 1px; }
input[type=radio] { border-radius: 50%; }
input[type=radio]:checked { background: radial-gradient(circle, #d13f0a 2px, #fff 3px); }
.field { display: block; min-width: 0; font-size: 8px; line-height: 12px; color: #333; }
.field > input, .select, .date { display: flex; width: 100%; height: 26px; margin-top: 3px; border: 1px solid #555; border-radius: 3px; background: #fff; font-size: 9px; color: #141413; }
.field > input { padding: 0 7px; }
.field > input:disabled, .date.off { background: #f2f1f1; border-color: #e8e7e7; color: #b3b2b2; }
.select { position: relative; }
.select select { appearance: none; flex: 1; border: 0; background: none; padding: 0 7px; }
.select::after { content: ""; position: absolute; right: 7px; top: 10px; border: 4px solid transparent; border-top: 5px solid #141413; border-bottom: 0; }
.date { align-items: center; padding: 0 6px 0 7px; }
.date input { flex: 1; min-width: 0; border: 0; padding: 0; background: none; }
.date svg { width: 12px; height: 13px; color: #d13f0a; }
.date.off svg { color: #c4c3c3; }
.date.now svg { color: #333; }
.date.off input { color: #a9a8a8; }
.fields { display: grid; grid-template-columns: repeat(4, 1fr); gap: 13px 15px; }
.fields-3 { grid-template-columns: repeat(3, 1fr); column-gap: 21px; }
.dates { display: flex; gap: 15px; margin-top: 16px; }
.dates .field { width: 104px; }
.dates-wide { gap: 20px; margin-top: 12px; }
.buttons { display: flex; gap: 10px; margin-top: 29px; }
.btn { height: 26px; padding: 0 21px; border: 1px solid #d13f0a; border-radius: 13px; background: #fff; box-shadow: inset 0 0 0 1px #d13f0a; color: #d13f0a; font-size: 10px; font-weight: 500; }
.panel .btn { background: none; }
.btn.solid, .panel .btn.solid { background: #d13f0a; color: #fff; }
.btn:disabled { background: #e9e8e7; border-color: #e9e8e7; box-shadow: none; color: #fafafa; }
.panel { margin-top: 14px; padding: 14px 64px 26px 16px; border-radius: 8px; background: #faf7f5; }
.actions { display: flex; color: #d13f0a; font-weight: 500; }
.actions a { display: flex; align-items: center; gap: 4px; padding-right: 11px; margin-right: 10px; border-right: 1px solid #ddd; }
.actions a:last-child { border: 0; }
.i12 { width: 12px; height: 12px; }
.i6 { width: 6px; height: 5px; }
.i13 { width: 13px; height: 13px; }
.data { width: 100%; table-layout: fixed; border-collapse: collapse; text-align: left; white-space: nowrap; }
.data th { height: 27px; padding: 0 0 0 9px; border-bottom: 3px solid #ababab; font-weight: 600; background: repeating-linear-gradient(#999 0 1px, transparent 1px 6px) 0 6px / 1px 13px no-repeat; }
.data th:first-child { border-bottom-color: #d13f0a; background: none; }
.data th svg { display: inline-block; width: 11px; height: 10px; margin-left: 2px; color: #d13f0a; vertical-align: -2px; }
.data td { height: 26px; padding: 0 0 0 10px; border-bottom: 1px solid #dedede; }
.data td a { color: #d13f0a; font-weight: 500; }
.title-row { display: flex; align-items: center; justify-content: space-between; height: 21px; }
.pager { display: flex; align-items: center; gap: 7px; font-size: 8px; }
.pager label { display: flex; align-items: center; gap: 3px; margin-left: 4px; }
.pager input { width: 26px; height: 21px; border: 1px solid #141413; border-radius: 3px; text-align: center; padding: 0; font-size: 9px; }
.pager span { margin: 0 4px 0 -4px; }
.p7 { width: 7px; height: 9px; }
.p5 { width: 5px; height: 9px; }
.comment { margin-top: 12px; }
.comment textarea { display: block; width: 100%; height: 53px; margin-top: 3px; padding: 5px 7px; border: 1px solid #555; border-radius: 3px; font-size: 9px; line-height: 14px; color: #141413; }
.remaining { margin-top: 4px; font-size: 8px; line-height: 12px; color: #666; }
.comment-buttons { margin-top: 13px; }

/* Petitions card */
.petitions { display: flex; gap: 15px; height: 359px; padding: 0 14px; background: #f0efee; border-radius: 0 0 8px 8px; }
.petitions-main { flex: 1; min-width: 0; padding: 12px 0 0 16px; background: #fff; }
.petitions .choices { margin-top: 14px; }
.fields-3 { margin: 17px 33px 0 0; }
.petitions .buttons { margin-top: 27px; }
.petitions .actions { margin: 36px 0 0 4px; }
.t-branch { width: 606px; margin: 13px 0 0 5px; }
.t-branch col:nth-child(1) { width: 83px; }
.t-branch col:nth-child(2) { width: 62px; }
.t-branch col:nth-child(3) { width: 83px; }
.t-branch col:nth-child(4) { width: 79px; }
.t-branch col:nth-child(5) { width: 69px; }
.t-branch col:nth-child(6) { width: 107px; }
.t-branch col:nth-child(7) { width: 69px; }
.manuals { display: flex; flex-direction: column; gap: 21px; align-self: flex-start; width: 210px; padding: 16px 16px 30px; background: #fff; }
.manual { display: flex; gap: 14px; white-space: nowrap; }
.manual svg { width: 14px; height: 16px; margin-top: 3px; }
.manual a { display: block; color: #d13f0a; font-size: 10px; font-weight: 500; }
.manual p { margin-top: 4px; font-size: 8px; line-height: 8px; font-weight: 500; }

/* Service log card */
.service { margin: 0 3px 0 -3px; }
.toast { position: absolute; left: 421px; top: 116px; display: flex; align-items: center; gap: 9px; width: 224px; height: 34px; padding: 0 12px 0 10px; border-radius: 3px; background: #088a06; color: #fff; font-size: 10px; font-weight: 500; }
.toast button { margin-left: auto; padding: 0; border: 0; background: none; color: #fff; }
.toast button svg { width: 11px; height: 11px; }
.service-body { display: flex; padding: 0 15px 22px 14px; }
.side-menu { width: 225px; padding-top: 22px; }
.side-menu h3 { margin: 16px 0 6px 1px; font-size: 10px; line-height: 14px; }
.side-menu .back + h3 { margin-top: 20px; }
.side-menu li { padding-left: 7px; font-size: 10px; line-height: 21px; font-weight: 500; }
.service-main { flex: 1; padding-top: 46px; }
.h-history { margin-top: 16px; }
.t-history { width: 639px; margin-top: 17px; }
.t-history col:nth-child(1) { width: 99px; }
.t-history col:nth-child(2) { width: 49px; }
.t-history col:nth-child(3) { width: 74px; }
.t-history col:nth-child(4) { width: 265px; }
.t-history td:last-child { border-left: 1px solid #dedede; }
.service-main .h-invest { margin-top: 28px; }
.service-main .desc { margin-top: 11px; }
.invest-buttons { gap: 15px; margin-top: 20px; }
.service-main .h-comment { margin-top: 33px; }
.service-main .checks { margin-top: 15px; }
.service-main .comment { width: 382px; }

/* Search and results cards */
.page-body { padding: 22px 14px 0; }
.by-kind { margin-top: 12px; }
.search { min-height: 710px; }
.results { max-height: 569px; }
.results hr { margin: 16px 18px 16px; border: 0; border-top: 1px solid #e9e9e9; }
.results .actions { margin-top: 16px; }
.t-results { margin-top: 15px; }
.t-results col:nth-child(1) { width: 83px; }
.t-results col:nth-child(2) { width: 63px; }
.t-results col:nth-child(3) { width: 93px; }
.t-results col:nth-child(4) { width: 80px; }
.t-results col:nth-child(5) { width: 107px; }
.t-results col:nth-child(6) { width: 100px; }

/* Invoice card */
.invoice-body { display: flex; }
.invoice-main { flex: 1; min-width: 0; padding: 22px 0 0 14px; }
.invoice-main .title-row { margin: 10px 11px 0 0; }
.invoice-main .actions { margin-top: 20px; }
.summary { display: grid; grid-template-columns: repeat(4, minmax(0, 1fr)); row-gap: 17px; margin: 20px 44px 21px 0; padding: 15px 0 15px 16px; border-radius: 8px; background: #faf7f5; }
.summary dt { font-size: 8px; line-height: 12px; color: #333; }
.summary dd { font-size: 10px; font-weight: 500; }
.summary .pills { display: flex; gap: 11px; margin-top: 3px; font-size: 9px; font-weight: 400; line-height: 16px; }
.pill { padding: 0 9px; border-radius: 8px; background: #e3e2e1; white-space: nowrap; }
.pill.amber { background: #fbb61e; }
.pill.red { background: #d13f0a; color: #fff; }
.pill.green { background: #2f7d22; color: #fff; }
.fold { border-top: 1px solid #e6e6e6; }
.fold-last { border-bottom: 1px solid #e6e6e6; }
.fold-head { display: flex; align-items: center; gap: 15px; height: 47px; padding: 0 16px 0 6px; }
.fold-head h4 { margin-right: auto; }
.fold-head a { color: #d13f0a; font-size: 10px; font-weight: 500; }
.fold-head button { padding: 0; border: 0; background: none; color: #141413; }
.fold-head svg { width: 12px; height: 7px; }
.fold-body { margin-top: -2px; padding: 0 54px 15px 6px; }
.fold-body .fields { grid-template-columns: repeat(3, minmax(0, 1fr)); }
.zone { display: grid; grid-template-columns: 110px repeat(3, minmax(0, 1fr)); column-gap: 21px; margin-top: 14px; }
.zone b { font-size: 8px; font-weight: 700; padding-top: 2px; white-space: nowrap; }
.log { flex: none; width: 239px; padding: 47px 14px 30px; border-left: 1px solid #dedede; }
.log h2 + h4 { margin-top: 22px; }
.entry { border-bottom: 1px solid #ababab; padding: 11px 0 2px; }
.entry time { display: block; font-weight: 600; }
.entry p { margin-top: 6px; }
.entry small { display: block; margin-top: 3px; font-size: 8px; color: #666; }
.entry b { font-weight: 600; }
.more { display: block; margin-top: 12px; color: #d13f0a; font-weight: 500; }
.log .h-invest { margin-top: 21px; }
.log .desc { margin-top: 12px; white-space: nowrap; }
.stacked { flex-direction: column; align-items: flex-start; margin-top: 19px; }
.log .h-comment { margin-top: 32px; }
.log .checks { margin-top: 15px; }
.log .checks + .checks { margin-top: 12px; }
```
